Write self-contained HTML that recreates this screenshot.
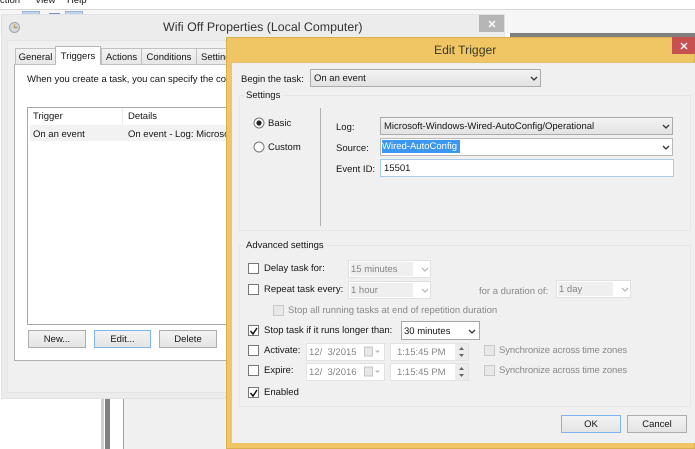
<!DOCTYPE html>
<html><head><meta charset="utf-8"><style>
html,body{margin:0;padding:0;background:#fff}
#r{position:relative;width:695px;height:449px;overflow:hidden;background:#fff;font-family:"Liberation Sans",sans-serif;font-size:9.5px;color:#151515;filter:blur(0.3px);text-rendering:geometricPrecision}
#r div,#r span.t{position:absolute;box-sizing:border-box}
.t{white-space:nowrap;line-height:12px;padding-top:1px}
.g{color:#888}
.btn{background:linear-gradient(#f2f2f2,#e4e4e4);border:1px solid #adadad;text-align:center;line-height:16px;color:#151515}
.cb{width:11px;height:11px;background:#fff;border:1px solid #777}
.cbd{width:11px;height:11px;background:#e8e8e8;border:1px solid #c8c8c8}
.combo{background:linear-gradient(#f2f2f2,#e2e2e2);border:1px solid #acacac;line-height:16px;padding-left:3px;color:#151515}
.dis{background:#fff;border:1px solid #e0e0e0;line-height:15px;color:#858585}
.dis i{position:absolute;left:1px;top:1px;bottom:1px;right:17px;background:#efefef}
.dis span{position:relative;padding-left:2px}
.date{background:#fff;border:1px solid #e2e2e2;line-height:16px;color:#858585}
svg{position:absolute;overflow:visible}
</style></head><body><div id="r">

<div class="t" style="left:0;top:-6px">ction</div>
<div class="t" style="left:35px;top:-6px">View</div>
<div class="t" style="left:67px;top:-6px">Help</div>
<div style="left:0;top:9px;width:695px;height:1px;background:#d8d8d8"></div>
<div style="left:0;top:10px;width:695px;height:24px;background:#f6f6f6"></div>
<div style="left:22px;top:11px;width:18px;height:4px;background:#bcd3ee;border:1px solid #9bb6d8"></div>
<div style="left:49px;top:13px;width:11px;height:2px;background:#7d93c8"></div>
<div style="left:65px;top:11px;width:18px;height:4px;background:#bcd3ee;border:1px solid #9bb6d8"></div>

<!-- lower background -->
<div style="left:101px;top:398px;width:3px;height:51px;background:#d0d0d0"></div>
<div style="left:105px;top:398px;width:5px;height:51px;background:#808080"></div>
<div style="left:123px;top:398px;width:1px;height:51px;background:#a0a0a0"></div>
<div style="left:124px;top:398px;width:110px;height:51px;background:#f0f0f0"></div>

<!-- properties window -->
<div style="left:1px;top:14px;width:504px;height:385px;background:#ececec;border:1px solid #e2e2e2"></div>
<div style="left:7px;top:40px;width:240px;height:353px;background:#f0f0f0;border:1px solid #e4e4e4"></div>
<div class="t" style="left:163px;top:20px;font-size:12.4px;line-height:15px;color:#333;padding-top:0">Wifi Off Properties (Local Computer)</div>
<div style="left:479px;top:15px;width:25px;height:17px;background:#b6b6b6"></div>
<svg style="left:488px;top:20px" width="8" height="8"><path d="M1 1L7 7M7 1L1 7" stroke="#fff" stroke-width="1.4"/></svg>
<svg style="left:9px;top:22px" width="12" height="12" viewBox="0 0 12 12"><circle cx="5.5" cy="5.5" r="5" fill="#d4d8dc" stroke="#a0a6ac"/><path d="M5.5 2.5V5.5H8.500" stroke="#b49a4a" fill="none" stroke-width="1.200"/></svg>

<div style="left:14px;top:64px;width:230px;height:297px;background:#fff;border:1px solid #b0b0b0"></div>
<div class="t" style="left:15px;top:48px;width:41px;height:17px;background:linear-gradient(#f3f3f3,#e6e6e6);border:1px solid #c0c0c0;text-align:center;line-height:16px">General</div>
<div class="t" style="left:101px;top:48px;width:41px;height:17px;background:linear-gradient(#f3f3f3,#e6e6e6);border:1px solid #c0c0c0;text-align:center;line-height:16px">Actions</div>
<div class="t" style="left:141px;top:48px;width:56px;height:17px;background:linear-gradient(#f3f3f3,#e6e6e6);border:1px solid #c0c0c0;text-align:center;line-height:16px">Conditions</div>
<div class="t" style="left:196px;top:48px;width:50px;height:17px;background:linear-gradient(#f3f3f3,#e6e6e6);border:1px solid #c0c0c0;padding-left:4px;line-height:16px">Settings</div>
<div class="t" style="left:55px;top:46px;width:46px;height:19px;background:#fff;border:1px solid #b8b8b8;border-bottom:0;text-align:center;line-height:17px">Triggers</div>
<div class="t" style="left:27px;top:73px">When you create a task, you can specify the conditions</div>

<div style="left:27px;top:107px;width:215px;height:218px;background:#fff;border:1px solid #a8a8a8"></div>
<div style="left:122px;top:108px;width:1px;height:17px;background:#ececec"></div>
<div class="t" style="left:33px;top:110px">Trigger</div>
<div class="t" style="left:128px;top:110px">Details</div>
<div style="left:30px;top:125px;width:210px;height:16px;background:#f2f2f2"></div>
<div class="t" style="left:33px;top:128px">On an event</div>
<div class="t" style="left:128px;top:128px">On event - Log: Microsoft</div>
<div class="t btn" style="left:28px;top:330px;width:58px;height:18px">New...</div>
<div class="t btn" style="left:94px;top:330px;width:57px;height:18px;border-color:#7db5ec">Edit...</div>
<div class="t btn" style="left:159px;top:330px;width:58px;height:18px">Delete</div>

<!-- edit trigger -->
<div style="left:510px;top:33px;width:185px;height:4px;background:#7f7f7f"></div>
<div style="left:226px;top:37px;width:469px;height:412px;background:#f0c665;border:1px solid #d8b050"></div>
<div style="left:232px;top:62px;width:463px;height:381px;background:#f0f0f0;border-top:1px solid #e0c070"></div>
<div class="t" style="left:434px;top:43px;font-size:12.200px;line-height:15px;color:#3a3a2a;padding-top:0">Edit Trigger</div>
<div style="left:672px;top:37px;width:23px;height:17px;background:#c75050"></div>
<svg style="left:680px;top:42px" width="8" height="8"><path d="M1 1L7 7M7 1L1 7" stroke="#fff" stroke-width="1.4"/></svg>

<div class="t" style="left:241px;top:73px">Begin the task:</div>
<div class="t combo" style="left:310px;top:69px;width:231px;height:18px">On an event</div>
<svg style="left:530px;top:76px" width="8" height="5"><path d="M1 1L4 4L7 1" stroke="#333" fill="none" stroke-width="1.300"/></svg>

<div style="left:239px;top:95px;width:452px;height:136px;border:1px solid #e6e6e6"></div>
<div class="t" style="left:244px;top:89px;background:#f0f0f0;padding:1px 2px 0">Settings</div>
<div style="left:320px;top:108px;width:1px;height:118px;background:#b0b0b0"></div>
<svg style="left:253px;top:117px" width="12" height="36" viewBox="0 0 12 36"><circle cx="6" cy="6" r="5" fill="#fff" stroke="#777"/><circle cx="6" cy="6" r="2.600" fill="#222"/><circle cx="6" cy="30" r="5" fill="#fff" stroke="#777"/></svg>
<div class="t" style="left:268px;top:117px">Basic</div>
<div class="t" style="left:268px;top:141px">Custom</div>

<div class="t" style="left:336px;top:121px">Log:</div>
<div class="t" style="left:336px;top:142px">Source:</div>
<div class="t" style="left:336px;top:163px">Event ID:</div>
<div class="t combo" style="left:380px;top:117px;width:293px;height:18px">Microsoft-Windows-Wired-AutoConfig/Operational</div>
<svg style="left:662px;top:124px" width="8" height="5"><path d="M1 1L4 4L7 1" stroke="#333" fill="none" stroke-width="1.300"/></svg>
<div style="left:380px;top:138px;width:293px;height:18px;background:#fff;border:1px solid #b8b8b8"></div>
<div class="t" style="left:382px;top:140px;width:78px;height:13px;background:#3b97f0;color:#fff;padding-left:0;line-height:13px;padding-top:0">Wired-AutoConfig</div>
<svg style="left:662px;top:145px" width="8" height="5"><path d="M1 1L4 4L7 1" stroke="#333" fill="none" stroke-width="1.300"/></svg>
<div class="t" style="left:380px;top:159px;width:294px;height:18px;background:#fff;border:1px solid #a8cdec;padding-left:3px;line-height:16px">15501</div>

<div style="left:239px;top:245px;width:452px;height:162px;border:1px solid #e6e6e6"></div>
<div class="t" style="left:244px;top:239px;background:#f0f0f0;padding:1px 2px 0">Advanced settings</div>

<div class="cb" style="left:248px;top:263px"></div>
<div class="t" style="left:264px;top:262px">Delay task for:</div>
<div class="t dis" style="left:348px;top:260px;width:83px;height:18px"><i></i><span>15 minutes</span></div>
<svg style="left:421px;top:267px" width="8" height="5"><path d="M1 1L4 4L7 1" stroke="#aaa" fill="none"/></svg>

<div class="cb" style="left:248px;top:284px"></div>
<div class="t" style="left:264px;top:283px">Repeat task every:</div>
<div class="t dis" style="left:348px;top:281px;width:83px;height:18px"><i></i><span>1 hour</span></div>
<svg style="left:421px;top:288px" width="8" height="5"><path d="M1 1L4 4L7 1" stroke="#aaa" fill="none"/></svg>
<div class="t g" style="left:479px;top:285px">for a duration of:</div>
<div class="t dis" style="left:556px;top:280px;width:75px;height:18px"><i></i><span>1 day</span></div>
<svg style="left:621px;top:287px" width="8" height="5"><path d="M1 1L4 4L7 1" stroke="#aaa" fill="none"/></svg>

<div class="cbd" style="left:273px;top:305px"></div>
<div class="t g" style="left:288px;top:304px">Stop all running tasks at end of repetition duration</div>

<div class="cb" style="left:248px;top:325px"></div>
<svg style="left:249px;top:326px" width="10" height="10"><path d="M1.500 5L4 8L8 2" stroke="#111" fill="none" stroke-width="1.500"/></svg>
<div class="t" style="left:264px;top:324px">Stop task if it runs longer than:</div>
<div class="t" style="left:401px;top:321px;width:79px;height:19px;background:#fff;border:1px solid #a8a8a8;padding-left:2px;line-height:17px">30 minutes</div>
<svg style="left:468px;top:329px" width="8" height="5"><path d="M1 1L4 4L7 1" stroke="#333" fill="none" stroke-width="1.300"/></svg>

<div class="cb" style="left:248px;top:345px"></div>
<div class="t" style="left:264px;top:344px">Activate:</div>
<div class="t date" style="left:306px;top:343px;width:79px;height:18px;padding-left:2px">12/&nbsp; 3/2015</div>
<svg style="left:364px;top:346px" width="18" height="11"><rect x="0.500" y="1" width="8" height="9" fill="#e8e8e8" stroke="#c4c4c4"/><path d="M11 4.500H16L13.500 7Z" fill="#bbb"/></svg>
<div class="t date" style="left:390px;top:343px;width:79px;height:18px;padding-left:6px">1:15:45 PM</div>
<div style="left:455px;top:344px;width:13px;height:16px;background:#ececec"></div>
<svg style="left:458px;top:346px" width="7" height="12"><path d="M3.500 1L6 4H1ZM3.500 11L1 8H6Z" fill="#666"/></svg>
<div class="cbd" style="left:484px;top:345px"></div>
<div class="t g" style="left:499px;top:344px;letter-spacing:-0.12px">Synchronize across time zones</div>

<div class="cb" style="left:248px;top:365px"></div>
<div class="t" style="left:264px;top:364px">Expire:</div>
<div class="t date" style="left:306px;top:363px;width:79px;height:18px;padding-left:2px">12/&nbsp; 3/2016</div>
<svg style="left:364px;top:366px" width="18" height="11"><rect x="0.500" y="1" width="8" height="9" fill="#e8e8e8" stroke="#c4c4c4"/><path d="M11 4.500H16L13.500 7Z" fill="#bbb"/></svg>
<div class="t date" style="left:390px;top:363px;width:79px;height:18px;padding-left:6px">1:15:45 PM</div>
<div style="left:455px;top:364px;width:13px;height:16px;background:#ececec"></div>
<svg style="left:458px;top:366px" width="7" height="12"><path d="M3.500 1L6 4H1ZM3.500 11L1 8H6Z" fill="#666"/></svg>
<div class="cbd" style="left:484px;top:365px"></div>
<div class="t g" style="left:499px;top:364px;letter-spacing:-0.12px">Synchronize across time zones</div>

<div class="cb" style="left:248px;top:387px"></div>
<svg style="left:249px;top:388px" width="10" height="10"><path d="M1.500 5L4 8L8 2" stroke="#111" fill="none" stroke-width="1.500"/></svg>
<div class="t" style="left:264px;top:386px">Enabled</div>

<div class="t btn" style="left:561px;top:415px;width:60px;height:18px;border-color:#7db5ec">OK</div>
<div class="t btn" style="left:627px;top:415px;width:60px;height:18px">Cancel</div>

</div></body></html>
